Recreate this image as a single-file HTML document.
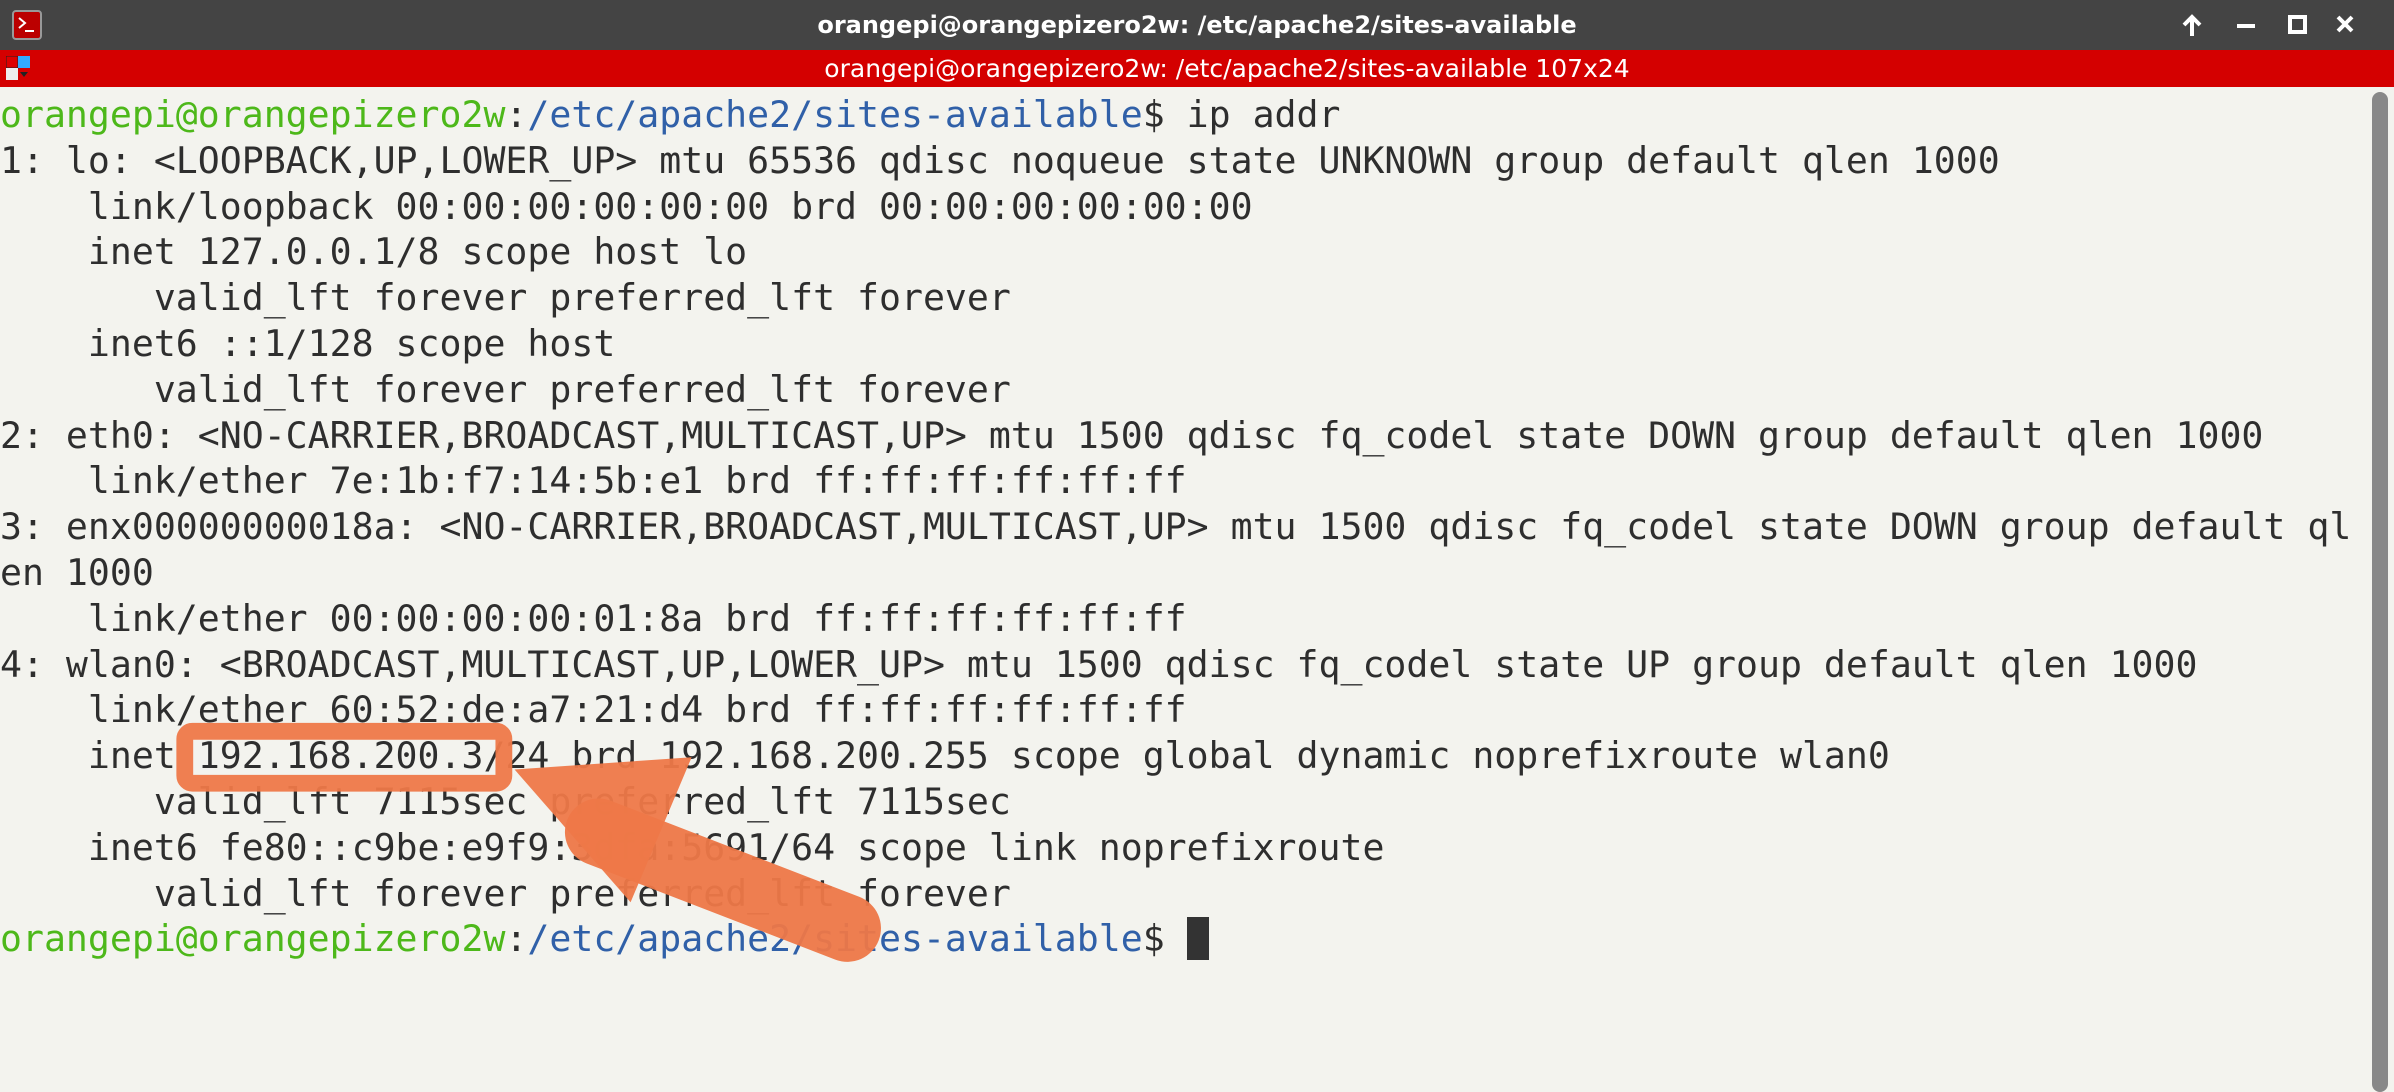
<!DOCTYPE html>
<html><head><meta charset="utf-8"><style>
*{margin:0;padding:0;box-sizing:border-box}
body{width:2394px;height:1091px;overflow:hidden;background:#f3f3ee;position:relative;font-family:"DejaVu Sans Mono","Liberation Mono",monospace}
#tb{position:absolute;left:0;top:0;width:2394px;height:50px;background:#444;color:#fff;font-family:"DejaVu Sans","Liberation Sans",sans-serif;font-size:24px;font-weight:bold;text-align:center;line-height:50px}
#rb{position:absolute;left:0;top:50px;width:2394px;height:37px;background:#d40000;color:#fff;font-family:"DejaVu Sans","Liberation Sans",sans-serif;font-size:25px;line-height:37px;text-align:center;padding-left:60px}
#term{position:absolute;left:0;top:92px;font-size:36.5px;line-height:45.8px;color:#2e2e2e;white-space:pre}
.g{color:#4db81a}.b{color:#3060a8}
#sb{position:absolute;left:2372px;top:92px;width:16px;height:1000px;background:#888;border-radius:8px}
</style></head><body>
<div id="tb">orangepi@orangepizero2w: /etc/apache2/sites-available
<svg style="position:absolute;left:12px;top:10px" width="30" height="30"><rect x="1" y="1" width="28" height="28" rx="3" fill="#b00" stroke="#999" stroke-width="2"/><path d="M7 8l6 5-6 5M13 21h9" stroke="#fff" stroke-width="2" fill="none"/></svg>
<svg style="position:absolute;left:2180px;top:12px" width="200" height="26"><path d="M12 24V6M4 13l8-8 8 8" stroke="#fff" stroke-width="4" fill="none"/><rect x="57" y="12" width="18" height="4" fill="#fff"/><rect x="110" y="5" width="15" height="15" stroke="#fff" stroke-width="4" fill="none"/><path d="M158 5l14 14M172 5l-14 14" stroke="#fff" stroke-width="4"/></svg>
</div>
<div id="rb">orangepi@orangepizero2w: /etc/apache2/sites-available 107x24
<svg style="position:absolute;left:6px;top:6px" width="26" height="26"><rect x="0" y="0" width="12" height="12" fill="#d00" stroke="#222"/><rect x="12" y="0" width="12" height="12" fill="#3af"/><rect x="0" y="12" width="12" height="12" fill="#eee"/><path d="M14 16h8l-4 5z" fill="#222"/></svg>
</div>
<div id="term"><span class="g">orangepi@orangepizero2w</span>:<span class="b">/etc/apache2/sites-available</span>$ ip addr
1: lo: &lt;LOOPBACK,UP,LOWER_UP&gt; mtu 65536 qdisc noqueue state UNKNOWN group default qlen 1000
    link/loopback 00:00:00:00:00:00 brd 00:00:00:00:00:00
    inet 127.0.0.1/8 scope host lo
       valid_lft forever preferred_lft forever
    inet6 ::1/128 scope host
       valid_lft forever preferred_lft forever
2: eth0: &lt;NO-CARRIER,BROADCAST,MULTICAST,UP&gt; mtu 1500 qdisc fq_codel state DOWN group default qlen 1000
    link/ether 7e:1b:f7:14:5b:e1 brd ff:ff:ff:ff:ff:ff
3: enx00000000018a: &lt;NO-CARRIER,BROADCAST,MULTICAST,UP&gt; mtu 1500 qdisc fq_codel state DOWN group default ql
en 1000
    link/ether 00:00:00:00:01:8a brd ff:ff:ff:ff:ff:ff
4: wlan0: &lt;BROADCAST,MULTICAST,UP,LOWER_UP&gt; mtu 1500 qdisc fq_codel state UP group default qlen 1000
    link/ether 60:52:de:a7:21:d4 brd ff:ff:ff:ff:ff:ff
    inet 192.168.200.3/24 brd 192.168.200.255 scope global dynamic noprefixroute wlan0
       valid_lft 7115sec preferred_lft 7115sec
    inet6 fe80::c9be:e9f9:3dfa:5691/64 scope link noprefixroute
       valid_lft forever preferred_lft forever
<span class="g">orangepi@orangepizero2w</span>:<span class="b">/etc/apache2/sites-available</span>$ <span style="background:#333">&#160;</span></div>
<div id="sb"></div>
<svg style="position:absolute;left:0;top:0" width="2394" height="1091" viewBox="0 0 1568 714.6">
<rect x="121" y="479" width="209" height="34" rx="5" fill="none" stroke="#ee7848" stroke-width="11" opacity="0.95"/>
<line x1="392" y1="545" x2="555" y2="608" stroke="#ee7848" stroke-width="44" stroke-linecap="round" opacity="0.95"/>
<polygon points="337,504 453,496 413,591" fill="#ee7848" opacity="0.95"/>
</svg>
</body></html>
